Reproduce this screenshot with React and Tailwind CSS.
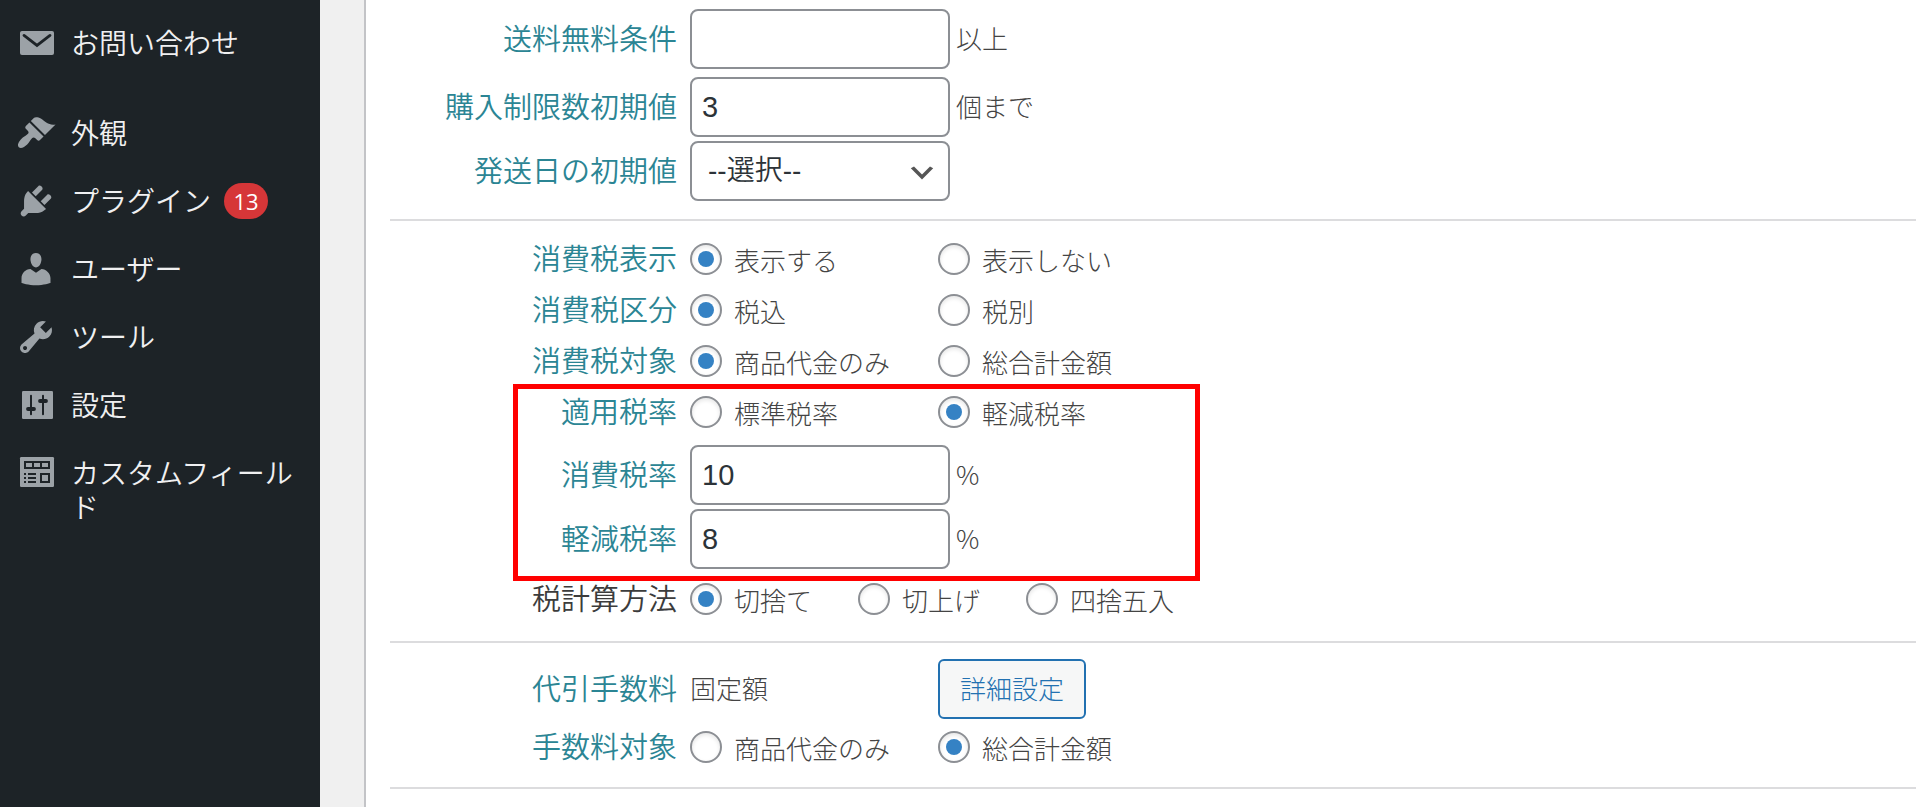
import { useState } from "react";

const menuItems = [
  { name: "お問い合わせ", icon: "mail" },
  { name: "外観", icon: "brush", separated: true },
  { name: "プラグイン", icon: "plug", badge: 13 },
  { name: "ユーザー", icon: "user" },
  { name: "ツール", icon: "wrench" },
  { name: "設定", icon: "sliders" },
  { name: "カスタムフィールド", icon: "fields" },
];

const icons = {
  mail: (
    <>
      <rect x="2" y="4" width="17" height="12" rx="1" />
      <path
        d="M4 6.2l6.5 5 6.5-5"
        fill="none"
        stroke="#1d2327"
        strokeWidth="1.4"
        strokeLinecap="round"
      />
    </>
  ),
  brush: (
    <path d="M14.48 11.06L7.41 3.99l1.5-1.5c.5-.56 2.3-.47 3.51.32 1.21.8 1.43 1.28 2.91 2.1 1.18.64 2.45 1.26 4.45.85zm-.71.71L6.7 4.7 4.93 6.47c-.39.39-.39 1.02 0 1.41l1.06 1.06c.39.39.39 1.03 0 1.42-.6.6-1.43 1.11-2.21 1.69-.35.26-.7.53-1.01.84C1.43 14.23.4 16.08 1.4 17.07c.99 1 2.84-.03 4.18-1.36.31-.31.58-.66.85-1.02.57-.78 1.08-1.61 1.69-2.21.39-.39 1.02-.39 1.41 0l1.06 1.06c.39.39 1.02.39 1.41 0z" />
  ),
  plug: (
    <path d="M13.11 4.36L9.87 7.6 8 5.73l3.24-3.24c.35-.34 1.05-.2 1.56.32.52.51.66 1.21.31 1.55zm-8 1.77l.91-1.12 9.01 9.01-1.19.84c-.71.71-2.63 1.16-3.82 1.16H6.14L4.9 17.26c-.59.59-1.54.59-2.12 0-.59-.58-.59-1.53 0-2.12l1.24-1.24v-3.88c0-1.13.4-3.19 1.09-3.89zm7.26 3.97l3.24-3.24c.34-.35 1.04-.21 1.55.31.52.51.66 1.21.31 1.55l-3.24 3.25z" />
  ),
  user: (
    <path d="M10 9.25c-2.27 0-2.73-3.44-2.73-3.44C7 4.02 7.82 2 9.97 2c2.16 0 2.98 2.02 2.71 3.81 0 0-.41 3.44-2.68 3.44zm0 2.57L12.72 10c2.39 0 4.52 2.33 4.52 4.53v2.49s-3.65 1.13-7.24 1.13c-3.65 0-7.24-1.13-7.24-1.13v-2.49c0-2.25 1.94-4.48 4.47-4.48z" />
  ),
  wrench: (
    <path d="M16.68 9.77c-1.34 1.34-3.3 1.67-4.95.99l-5.41 6.52c-.99.99-2.59.99-3.58 0s-.99-2.59 0-3.57l6.52-5.42c-.68-1.65-.35-3.61.99-4.95 1.28-1.28 3.12-1.62 4.72-1.06l-2.89 2.89 2.82 2.82 2.86-2.87c.53 1.58.18 3.39-1.08 4.65zM3.81 16.21c.4.39 1.04.39 1.43 0 .4-.4.4-1.04 0-1.43-.39-.4-1.03-.4-1.43 0-.39.39-.39 1.03 0 1.43z" />
  ),
  sliders: (
    <>
      <rect x="3" y="3" width="15.5" height="14" rx="0.6" />
      <g stroke="#1d2327" strokeLinecap="round">
        <path d="M7.5 5.4v9.2M13.5 5.4v9.2" strokeWidth="1" />
        <path d="M6 12h3M12 8h3" strokeWidth="1.9" />
      </g>
    </>
  ),
  fields: (
    <>
      <rect x="2" y="2" width="17" height="15" rx="0.6" />
      <path
        fill="#1d2327"
        d="M4 4h13v4H4zM12 10h5v5h-5zM6 10h4v1H6zM6 12h4v1H6zM6 14h4v1H6zM4 10h1v1H4zM4 12h1v1H4zM4 14h1v1H4z"
      />
      <path d="M5 5h3v2H5zM9 5h3v2H9zM13 5h3v2h-3zM13 11h3v3h-3z" />
    </>
  ),
};

function Sidebar() {
  return (
    <nav className="w-80 shrink-0 bg-[#1d2327] pt-[9px]">
      <ul>
        {menuItems.map((item) => (
          <li key={item.name} className={item.separated ? "mt-[22px]" : ""}>
            <a
              href="#"
              className="flex items-start py-4 pl-4 pr-4 text-[28px] font-[350] leading-[34px] text-[#f0f0f1]"
            >
              <svg
                viewBox="0 0 20 20"
                className="-my-0.5 h-10 w-10 shrink-0 fill-[#9ca2a7]"
                aria-hidden="true"
              >
                {icons[item.icon]}
              </svg>
              <span className="ml-[15px]">{item.name}</span>
              {item.badge && (
                <span className="ml-[13px] flex h-9 w-11 items-center justify-center rounded-full bg-[#d63638] font-['Open_Sans',sans-serif] text-[22px] font-normal text-white">
                  {item.badge}
                </span>
              )}
            </a>
          </li>
        ))}
      </ul>
    </nav>
  );
}

function Row({ label, htmlFor, plain, className = "", children }) {
  const labelClass = `w-[287px] shrink-0 pb-1 text-right text-[29px] font-[350] leading-7 ${
    plain ? "text-[#3c3c3c]" : "text-[#2b8594]"
  }`;
  return (
    <div className={`flex items-center ${className}`}>
      {htmlFor ? (
        <label htmlFor={htmlFor} className={labelClass}>
          {label}
        </label>
      ) : (
        <span className={labelClass}>{label}</span>
      )}
      <div className="ml-[13px] flex items-center">{children}</div>
    </div>
  );
}

function TextField({ id, unit, defaultValue }) {
  return (
    <>
      <input
        id={id}
        type="text"
        defaultValue={defaultValue}
        className="h-[60px] w-[260px] rounded-lg border-2 border-[#8c8f94] bg-white px-2.5 font-['Liberation_Sans',sans-serif] text-[29px] text-[#2c3338]"
      />
      <span className="ml-1.5 pb-0.5 text-[26px] leading-8 text-[#444]">{unit}</span>
    </>
  );
}

function RadioRow({ label, name, options, initial, plain, narrow, className }) {
  const [value, setValue] = useState(initial);
  return (
    <Row label={label} plain={plain} className={className}>
      <div role="radiogroup" aria-label={label} className="flex">
        {options.map((option) => (
          <label
            key={option}
            className={`flex h-8 items-center ${narrow ? "w-[168px]" : "w-[248px]"}`}
          >
            <input
              type="radio"
              name={name}
              checked={value === option}
              onChange={() => setValue(option)}
              className="flex h-8 w-8 shrink-0 appearance-none items-center justify-center rounded-full border-2 border-[#8c8f94] bg-white shadow-[inset_0_2px_4px_rgba(0,0,0,0.1)] checked:before:h-4 checked:before:w-4 checked:before:rounded-full checked:before:bg-[#3582c4] checked:before:content-['']"
            />
            <span className="ml-3 whitespace-nowrap pt-0.5 text-[26px] leading-8 text-[#444]">
              {option}
            </span>
          </label>
        ))}
      </div>
    </Row>
  );
}

export default function App() {
  return (
    <div className="flex min-h-screen bg-[#f0f0f0] font-['Noto_Sans_CJK_JP',sans-serif] font-[350]">
      <Sidebar />
      <main className="ml-11 min-w-0 flex-1 border-l-2 border-[#c3c4c7] bg-white pl-6 font-light">
        <section className="border-b-2 border-[#dcdcde] pb-[18px] pt-[9px]">
          <Row label="送料無料条件" htmlFor="free-shipping">
            <TextField id="free-shipping" unit="以上" />
          </Row>
          <Row label="購入制限数初期値" htmlFor="purchase-limit" className="mt-2">
            <TextField id="purchase-limit" unit="個まで" defaultValue="3" />
          </Row>
          <Row label="発送日の初期値" htmlFor="ship-date" className="mt-1">
            <div className="relative">
              <select
                id="ship-date"
                className="h-[60px] w-[260px] appearance-none rounded-lg border-2 border-[#8c8f94] bg-white px-4 font-['Liberation_Sans','Noto_Sans_CJK_JP',sans-serif] text-[28px] font-[350] text-[#2c3338]"
              >
                <option>--選択--</option>
              </select>
              <svg
                viewBox="0 0 20 20"
                className="pointer-events-none absolute right-3 top-4 h-8 w-8 fill-[#555]"
                aria-hidden="true"
              >
                <path d="M5 6l5 5 5-5 2 1-7 7-7-7 2-1z" />
              </svg>
            </div>
          </Row>
        </section>

        <section className="border-b-2 border-[#dcdcde] pb-[26px] pt-[22px]">
          <div className="flex flex-col gap-[19px]">
            <RadioRow
              label="消費税表示"
              name="tax-display"
              options={["表示する", "表示しない"]}
              initial="表示する"
            />
            <RadioRow
              label="消費税区分"
              name="tax-mode"
              options={["税込", "税別"]}
              initial="税込"
            />
            <RadioRow
              label="消費税対象"
              name="tax-target"
              options={["商品代金のみ", "総合計金額"]}
              initial="商品代金のみ"
            />
            <div className="relative">
              <RadioRow
                label="適用税率"
                name="tax-rate-type"
                options={["標準税率", "軽減税率"]}
                initial="軽減税率"
              />
              <Row label="消費税率" htmlFor="tax-rate" className="mt-[17px]">
                <TextField id="tax-rate" unit="%" defaultValue="10" />
              </Row>
              <Row label="軽減税率" htmlFor="reduced-rate" className="mt-1">
                <TextField id="reduced-rate" unit="%" defaultValue="8" />
              </Row>
              {/* red highlight frame */}
              <div className="pointer-events-none absolute -bottom-3 -top-3 left-[123px] w-[687px] border-5 border-[#ff0000]" />
            </div>
          </div>
          <RadioRow
            label="税計算方法"
            name="tax-rounding"
            options={["切捨て", "切上げ", "四捨五入"]}
            initial="切捨て"
            plain
            narrow
            className="mt-3.5"
          />
        </section>

        <section className="border-b-2 border-[#dcdcde] pb-6 pt-4">
          <Row label="代引手数料">
            <span className="w-[248px] pb-0.5 text-[26px] leading-8 text-[#444]">固定額</span>
            <button
              type="button"
              className="h-[60px] w-[148px] rounded-md border-2 border-[#2271b1] bg-[#f6f7f7] pb-1 text-[26px] text-[#2271b1]"
            >
              詳細設定
            </button>
          </Row>
          <RadioRow
            label="手数料対象"
            name="fee-target"
            options={["商品代金のみ", "総合計金額"]}
            initial="総合計金額"
            className="mt-3"
          />
        </section>
      </main>
    </div>
  );
}
